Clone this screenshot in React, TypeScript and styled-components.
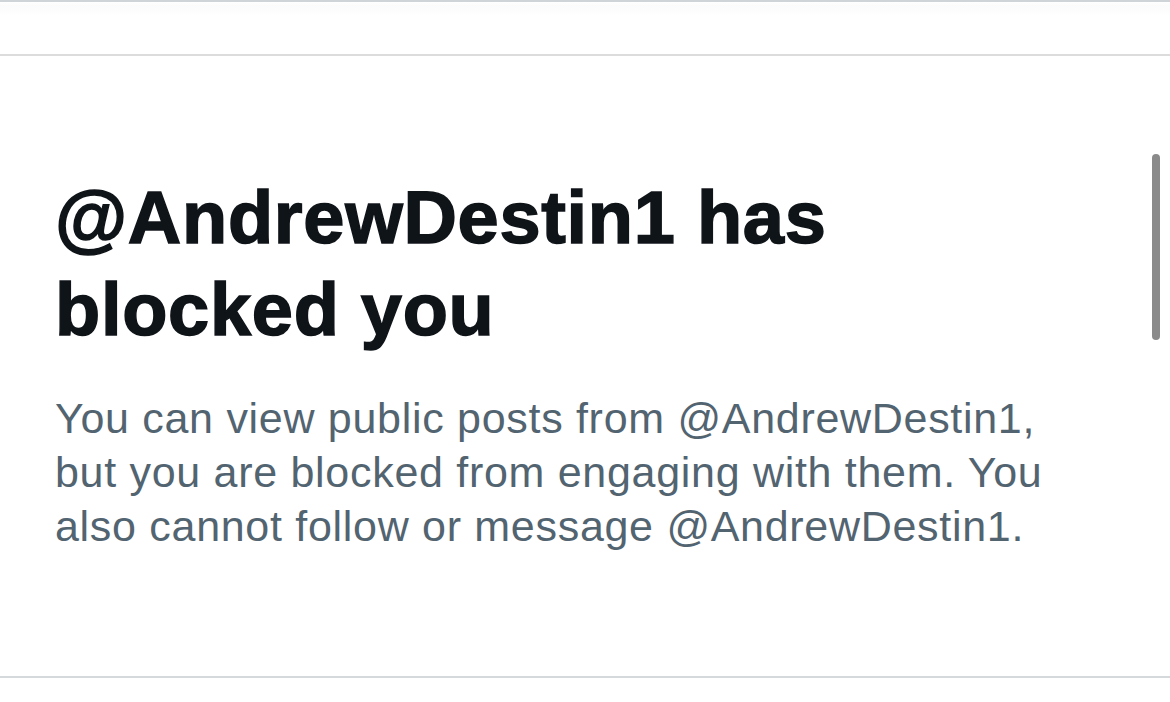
import styled, { createGlobalStyle } from 'styled-components'

const GlobalStyle = createGlobalStyle`
  html, body {
    margin: 0;
    padding: 0;
    background: #ffffff;
  }
  body {
    font-family: 'Liberation Sans', Arial, sans-serif;
    -webkit-font-smoothing: antialiased;
  }
`

const handle = '@AndrewDestin1'

const App = () => {
  return (
    <>
      <GlobalStyle />
      <Page>
        <TopBar />
        <Content>
          <Title>
            {handle} has
            <br />
            blocked you
          </Title>
          <Message>
            You can view public posts from {handle},
            <br />
            but you are blocked from engaging with them. You
            <br />
            also cannot follow or message {handle}.
          </Message>
        </Content>
        <Footer />
        <Scrollbar />
      </Page>
    </>
  )
}

const Page = styled.main`
  position: relative;
  width: 1170px;
  height: 702px;
  overflow: hidden;
  display: flex;
  flex-direction: column;
  border-top: 2px solid #cfd4d8;
  box-sizing: border-box;
`

const TopBar = styled.header`
  height: 52px;
  border-bottom: 2px solid #dcdcdc;
  background: linear-gradient(#ffffff, #fbfbfb 4px, #ffffff 14px);
`

const Content = styled.section`
  height: 620px;
  box-sizing: border-box;
  padding: 116px 0 0 55px;
`

const Title = styled.h1`
  margin: 0;
  font-family: 'Liberation Sans', Arial, sans-serif;
  font-weight: 700;
  font-size: 74px;
  line-height: 92px;
  color: #0f1419;
  letter-spacing: 0.7px;
  -webkit-text-stroke: 1.5px #0f1419;
`

const Message = styled.p`
  margin: 35px 0 0;
  font-family: 'Liberation Sans', Arial, sans-serif;
  font-weight: 400;
  font-size: 43px;
  line-height: 54px;
  color: #536471;
  letter-spacing: 0.7px;
`

const Footer = styled.footer`
  border-top: 2px solid #d6d9dc;
  flex: 1;
`

const Scrollbar = styled.div`
  position: absolute;
  top: 152px;
  right: 10px;
  width: 8px;
  height: 186px;
  border-radius: 4px;
  background: #8a8a8a;
`

export default App
